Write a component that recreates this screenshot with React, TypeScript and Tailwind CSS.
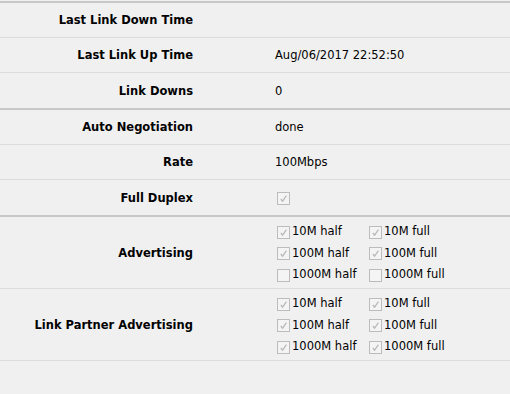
import React from "react";

function Box({ checked }: { checked: boolean }) {
  return (
    <span className="inline-flex h-[13px] w-[13px] shrink-0 items-center justify-center border border-[#bcbcbc] bg-[#f4f4f4]">
      {checked && (
        <svg width="9" height="9" viewBox="0 0 9 9">
          <path d="M1.8 5 L3.6 7.2 L7.4 1.6" fill="none" stroke="#b8b8b8" strokeWidth="1.2" />
        </svg>
      )}
    </span>
  );
}

function Check({ checked, label }: { checked: boolean; label: string }) {
  return (
    <div className="flex h-[21.5px] items-center gap-[2px]">
      <Box checked={checked} />
      <span>{label}</span>
    </div>
  );
}

function Row({ label, children, last, h = "h-[35px]" }: { label: string; children?: React.ReactNode; last?: boolean; h?: string }) {
  return (
    <div className={`flex items-center pt-[2px] ${h} ${last ? "" : "border-b border-[#dcdcdc]"}`}>
      <div className="w-[193px] text-right font-bold">{label}</div>
      <div className="ml-[82px]">{children}</div>
    </div>
  );
}

function Section({ children }: { children: React.ReactNode }) {
  return <div className="border-t-2 border-[#c8c8c8]">{children}</div>;
}

function Grid({ items }: { items: [string, boolean][] }) {
  return (
    <div className="grid grid-cols-[92px_92px]">
      {items.map(([l, c]) => (
        <Check key={l} label={l} checked={c} />
      ))}
    </div>
  );
}

export default function App() {
  return (
    <div
      className="h-[394px] w-[510px] bg-[#f0f0f0] pt-[1px] text-[11.5px] text-black"
      style={{ fontFamily: "Verdana, 'DejaVu Sans', sans-serif" }}
    >
      <Section>
        <Row label="Last Link Down Time" />
        <Row label="Last Link Up Time">Aug/06/2017 22:52:50</Row>
        <Row label="Link Downs" last>0</Row>
      </Section>
      <Section>
        <Row label="Auto Negotiation">done</Row>
        <Row label="Rate">100Mbps</Row>
        <Row label="Full Duplex" last>
          <div className="flex items-center pl-[2px]">
            <Box checked />
          </div>
        </Row>
      </Section>
      <Section>
        <Row label="Advertising" h="h-[72px]">
          <div className="pl-[2px]">
            <Grid
              items={[
                ["10M half", true],
                ["10M full", true],
                ["100M half", true],
                ["100M full", true],
                ["1000M half", false],
                ["1000M full", false],
              ]}
            />
          </div>
        </Row>
        <Row label="Link Partner Advertising" h="h-[72px]">
          <div className="pl-[2px]">
            <Grid
              items={[
                ["10M half", true],
                ["10M full", true],
                ["100M half", true],
                ["100M full", true],
                ["1000M half", true],
                ["1000M full", true],
              ]}
            />
          </div>
        </Row>
      </Section>
    </div>
  );
}
